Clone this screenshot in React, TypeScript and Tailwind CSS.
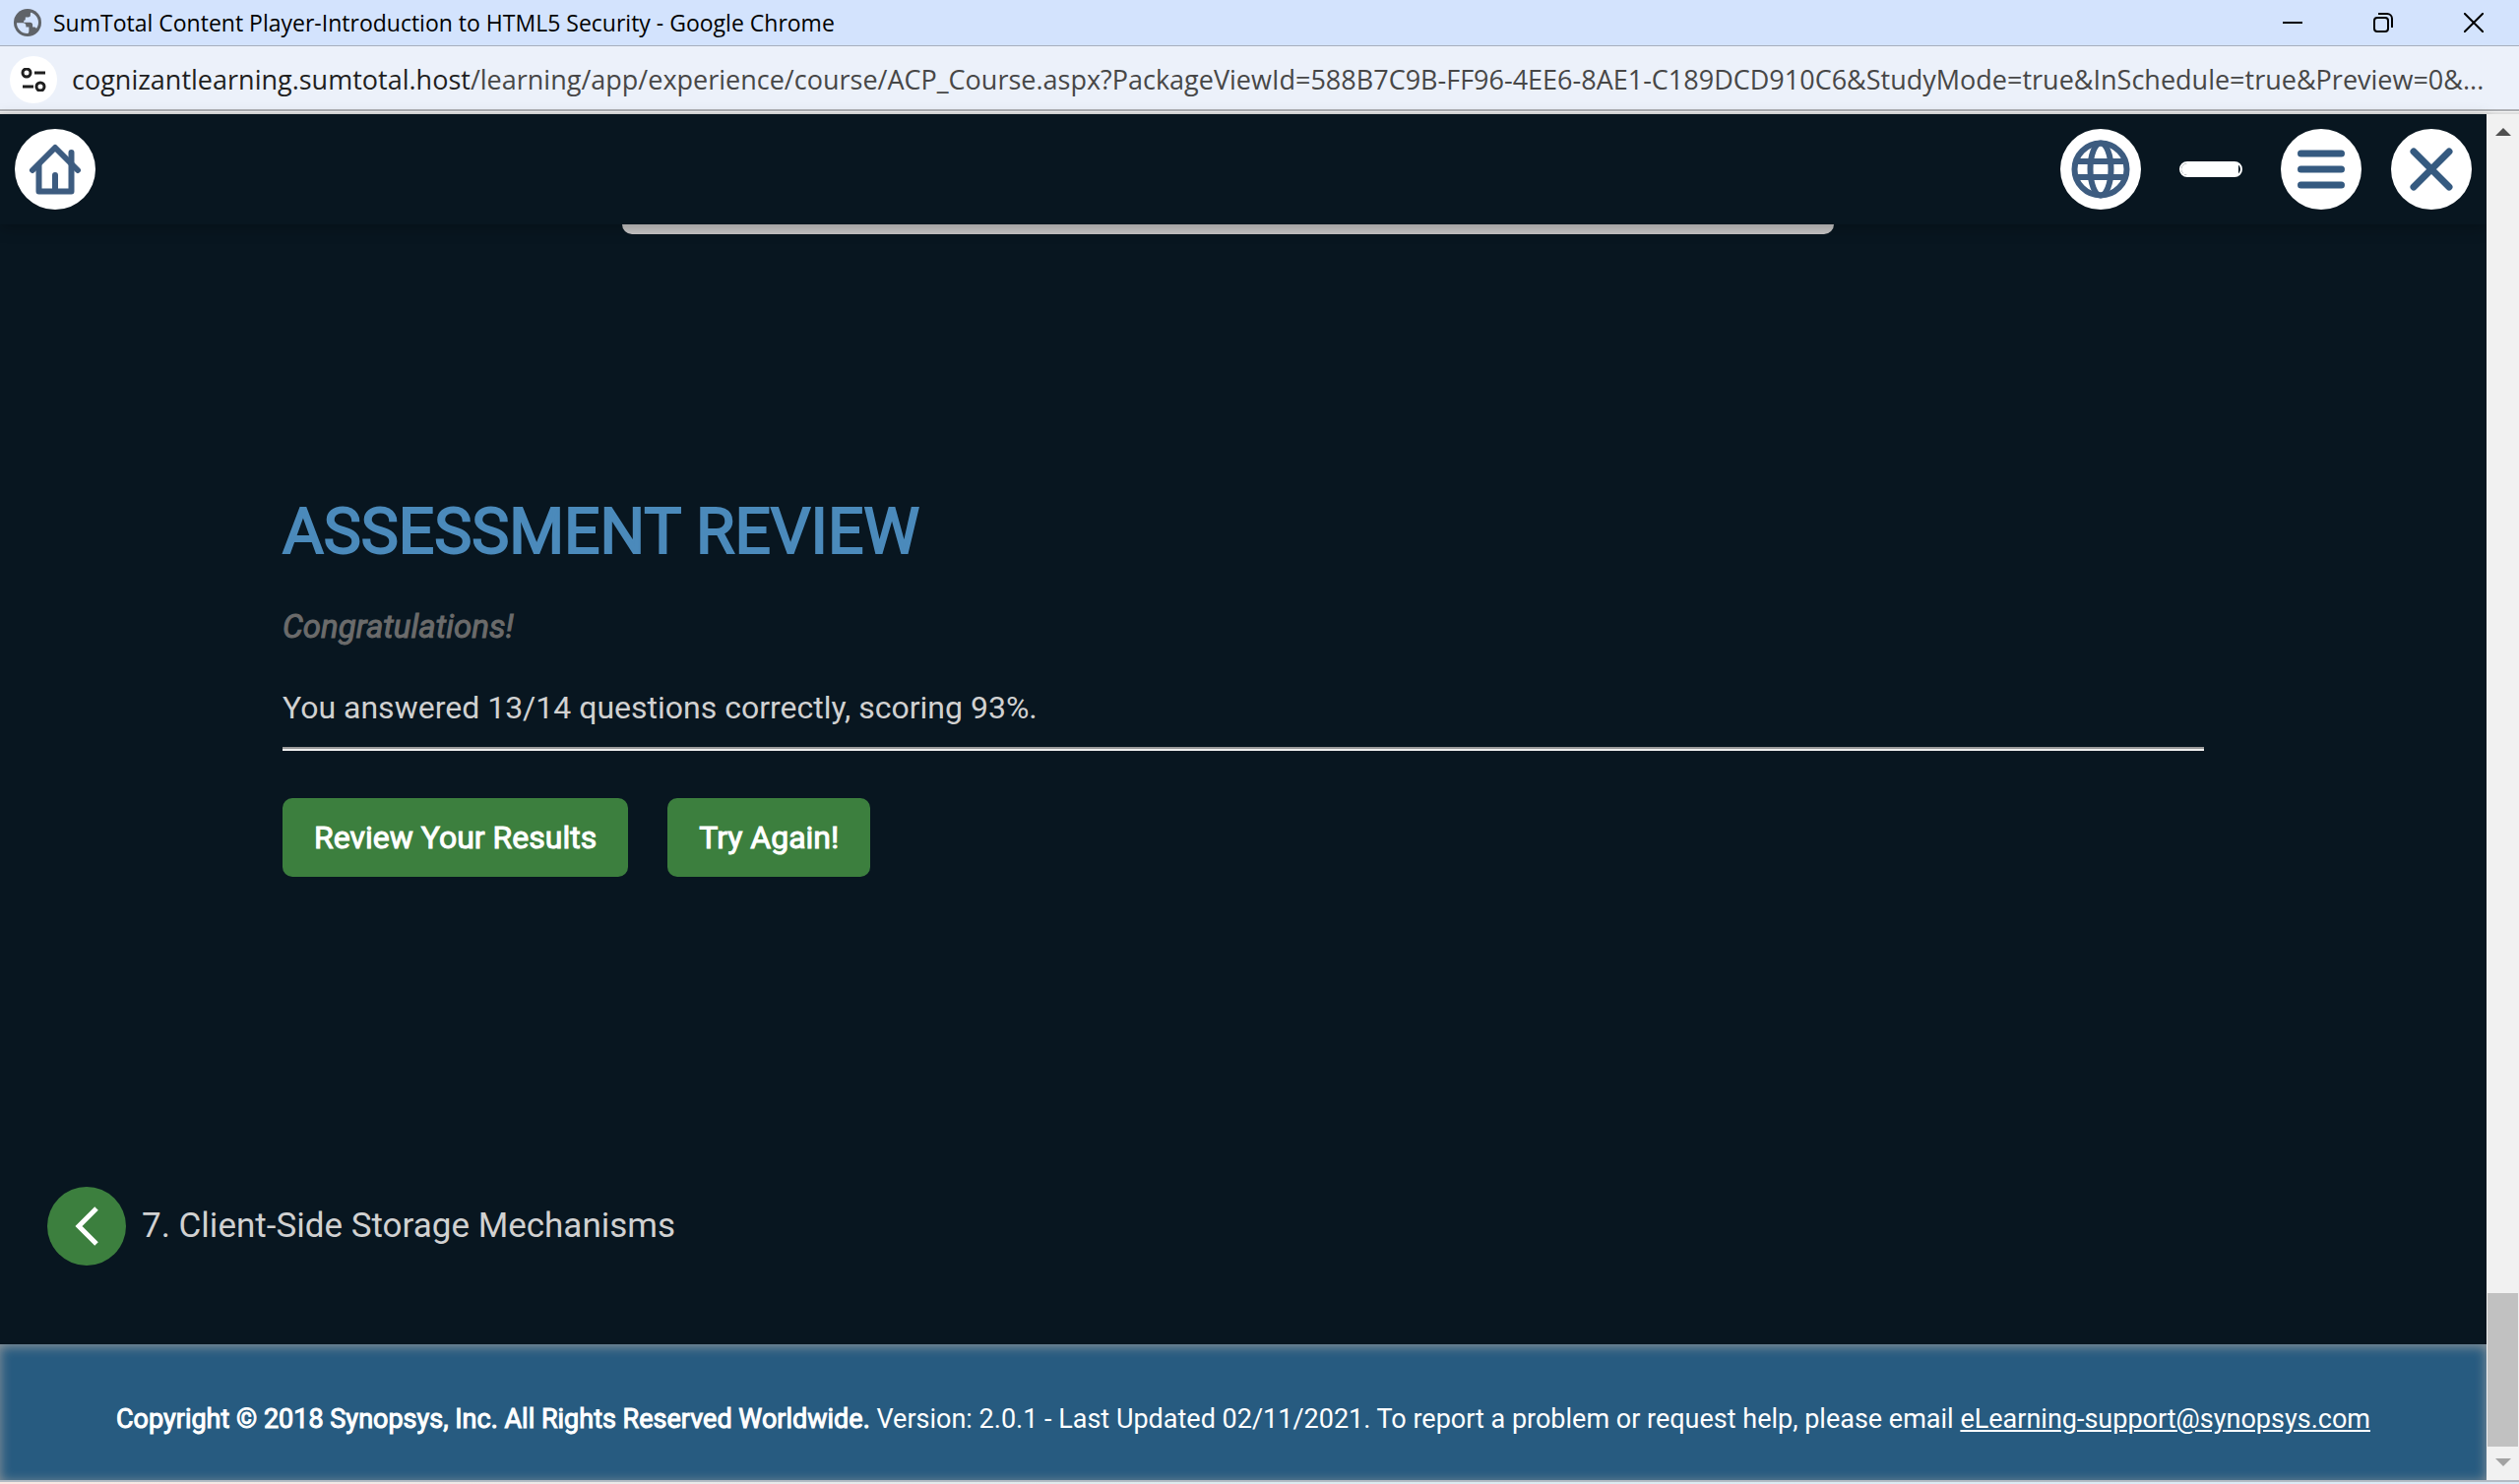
import type { ReactNode } from "react";

const INK = "#3d5c80";

function RoundButton({ label, children }: { label: string; children: ReactNode }) {
  return (
    <button type="button" aria-label={label} className="flex size-[82px] shrink-0 items-center justify-center rounded-full bg-white">
      {children}
    </button>
  );
}

function TitleBar() {
  return (
    <header className="flex h-[47px] items-center gap-3 border-b border-[#a7afbd] bg-[#d3e3fd] pl-[14px] text-black">
      <svg viewBox="0 0 28 28" className="size-7 shrink-0" aria-hidden="true">
        <circle cx="14" cy="14" r="14" fill="#5f6368" />
        <path
          d="M3 14.2h6.2c2 0 3.2 1.1 3.2 3.2v1.2h3v4c0 .8-.3 1.5-.9 2.3C8 25.200 3 20.400 3 14.200zM18 3.700c-.6 0-1.100.3-1.100 1v1.800c0 1.200-.9 2-2.200 2h-2.900v1.700c0 1-.6 1.600-1.600 1.600v2h6.300c1.700 0 2.600.9 2.600 2.500v2.100h1.500c1.200 0 2 .5 2.400 1.600 3.800-4.900 2.400-13.200-5-16.300z"
          fill="#d3e3fd"
        />
      </svg>
      <h1 className="grow truncate text-[23px] leading-8">
        SumTotal Content Player-Introduction to HTML5 Security - Google Chrome
      </h1>
      <div className="flex shrink-0">
        <button type="button" aria-label="Minimize" className="flex h-[46px] w-[92px] items-center justify-center">
          <svg viewBox="0 0 20 20" className="size-5" fill="none" stroke="currentColor" strokeWidth="2">
            <path d="M0 10h20" />
          </svg>
        </button>
        <button type="button" aria-label="Restore" className="flex h-[46px] w-[92px] items-center justify-center">
          <svg viewBox="0 0 20 20" className="size-5" fill="none" stroke="currentColor" strokeWidth="2">
            <rect x="1" y="5" width="14" height="14" rx="3" />
            <path d="M5 1h9a5 5 0 0 1 5 5v9" />
          </svg>
        </button>
        <button type="button" aria-label="Close window" className="flex h-[46px] w-[92px] items-center justify-center">
          <svg viewBox="0 0 20 20" className="size-5" fill="none" stroke="currentColor" strokeWidth="2">
            <path d="M0 0l20 20M20 0L0 20" />
          </svg>
        </button>
      </div>
    </header>
  );
}

function AddressBar() {
  return (
    <div className="flex h-[69px] items-center gap-[15px] border-b-2 border-[#dedede] bg-[#ecf1fa] pl-[10px] shadow-[inset_0_-1px_0_#f7f7f7,inset_0_-3px_0_#adafb3]">
      <button type="button" aria-label="View site information" className="flex size-12 shrink-0 items-center justify-center rounded-full bg-white">
        <svg viewBox="0 0 26 24" className="h-6 w-[26px]" fill="none" stroke="#1f1f1f" strokeWidth="3">
          <circle cx="6" cy="5" r="4" />
          <path d="M14 5h11M2 19h11" />
          <circle cx="20" cy="19" r="4" />
        </svg>
      </button>
      <p className="min-w-0 overflow-hidden text-[27px] leading-9 whitespace-nowrap text-[#474747]">
        <span className="text-[#1f1f1f]">cognizantlearning.sumtotal.host</span>
        /learning/app/experience/course/ACP_Course.aspx?PackageViewId=588B7C9B-FF96-4EE6-8AE1-C189DCD910C6&amp;StudyMode=true&amp;InSchedule=true&amp;Preview=0&amp;...
      </p>
    </div>
  );
}

function CourseHeader() {
  return (
    <nav className="relative z-10 flex h-28 items-center justify-between bg-[#081620] px-[15px] shadow-[0_4px_14px_rgba(0,0,0,0.25)]">
      <RoundButton label="Home">
        <svg viewBox="0 0 54 54" className="size-[54px]" fill="none" stroke={INK} strokeWidth="6" strokeLinecap="round" strokeLinejoin="round">
          <path d="M4 28L27 5l23 23" />
          <path d="M10.500 23v26.500h33V10" />
          <path d="M27 33v16" />
        </svg>
      </RoundButton>
      <div className="flex items-center gap-[30px]">
        <RoundButton label="Language">
          <svg viewBox="0 0 60 60" className="size-[60px]" fill="none" stroke={INK} strokeWidth="6">
            <circle cx="30" cy="30" r="26.500" />
            <ellipse cx="30" cy="30" rx="10.500" ry="26.500" />
            <path d="M5 22h50M5 38h50" />
          </svg>
        </RoundButton>
        <div className="flex w-[82px] justify-center">
          <div role="progressbar" aria-label="Course progress" aria-valuenow={96} className="flex h-4 w-16 rounded-full border-2 border-white bg-[#081620]">
            <div className="h-3 w-[58px] rounded-l-full rounded-r-sm bg-white" />
          </div>
        </div>
        <RoundButton label="Menu">
          <svg viewBox="0 0 48 42" className="h-[42px] w-12" fill="none" stroke="#355a80" strokeWidth="7" strokeLinecap="round">
            <path d="M3.500 5h41M3.500 21h41M3.500 37h41" />
          </svg>
        </RoundButton>
        <RoundButton label="Close course">
          <svg viewBox="0 0 44 44" className="size-11" fill="none" stroke="#355a80" strokeWidth="7" strokeLinecap="round">
            <path d="M4 4l36 36M40 4L4 40" />
          </svg>
        </RoundButton>
      </div>
    </nav>
  );
}

function ActionButton({ children }: { children: ReactNode }) {
  return (
    <button type="button" className="h-20 rounded-[10px] bg-[#3c7f3e] px-8 text-[32px] leading-10 text-white [-webkit-text-stroke:1px_currentColor]">
      {children}
    </button>
  );
}

function Review() {
  return (
    <section className="px-[287px] pt-[263px]">
      <h2 className="text-[64px] leading-[80px] text-[#4b8abb] uppercase [-webkit-text-stroke:2px_currentColor]">Assessment Review</h2>
      <p className="mt-9 text-[33px] leading-10 text-[#6b6b6b] italic [-webkit-text-stroke:1px_currentColor]">Congratulations!</p>
      <p className="mt-[42px] text-[32px] leading-10 text-[#d1d1d1]">You answered 13/14 questions correctly, scoring 93%.</p>
      <hr className="mt-5 border-t-2 border-b-2 border-t-[#9a9a9a] border-b-[#eeeeee]" />
      <div className="mt-12 flex gap-10">
        <ActionButton>Review Your Results</ActionButton>
        <ActionButton>Try Again!</ActionButton>
      </div>
    </section>
  );
}

function PageFooter() {
  return (
    <footer className="flex h-[138px] items-center justify-center bg-[#275b80] pt-[14px] text-white shadow-[inset_0_2px_12px_rgba(170,165,160,0.8)]">
      <p className="text-[27px] leading-8 whitespace-nowrap">
        <strong className="font-normal [-webkit-text-stroke:1px_currentColor]">Copyright © 2018 Synopsys, Inc. All Rights Reserved Worldwide.</strong> Version: 2.0.1 - Last Updated
        02/11/2021. To report a problem or request help, please email{" "}
        <a href="mailto:eLearning-support@synopsys.com" className="underline">eLearning-support@synopsys.com</a>
      </p>
    </footer>
  );
}

function ScrollBar() {
  return (
    <div className="relative z-20 flex w-[33px] shrink-0 flex-col items-center bg-[#f1f1f1]" aria-hidden="true">
      <svg viewBox="0 0 16 8" className="mt-[14px] h-2 w-4 shrink-0" fill="#505050">
        <path d="M0 8L8 0l8 8z" />
      </svg>
      <div className="grow" />
      <div className="h-[156px] w-[31px] bg-[#c1c1c1]" />
      <svg viewBox="0 0 16 8" className="mt-3 mb-[14px] h-2 w-4 shrink-0" fill="#a3a3a3">
        <path d="M0 0h16L8 8z" />
      </svg>
    </div>
  );
}

export default function App() {
  return (
    <div className="flex min-h-screen flex-col bg-[#081620] font-['Open_Sans',sans-serif]">
      <TitleBar />
      <AddressBar />
      <div className="flex grow font-['Roboto',sans-serif]">
        <main className="flex min-w-0 grow flex-col bg-[#081620]">
          <CourseHeader />
          <div className="mr-[663px] ml-[632px] h-[10px] rounded-b-[10px] bg-[#c9c7c7]" />
          <Review />
          <div className="mt-auto mb-20 flex items-center gap-4 px-12">
            <button type="button" aria-label="Previous" className="flex size-20 items-center justify-center rounded-full bg-[#3c7f3e]">
              <svg viewBox="0 0 24 40" className="h-10 w-6" fill="none" stroke="#ffffff" strokeWidth="5">
                <path d="M22 2L4 20l18 18" />
              </svg>
            </button>
            <a href="#storage" className="text-[35px] leading-10 text-[#d1d1d1]">7. Client-Side Storage Mechanisms</a>
          </div>
          <PageFooter />
        </main>
        <ScrollBar />
      </div>
      <div className="h-1 border-t-2 border-[#b3bbc4] bg-linear-to-r from-[#fbe7e2] via-[#dcebef] to-[#dceaf6]" />
    </div>
  );
}
